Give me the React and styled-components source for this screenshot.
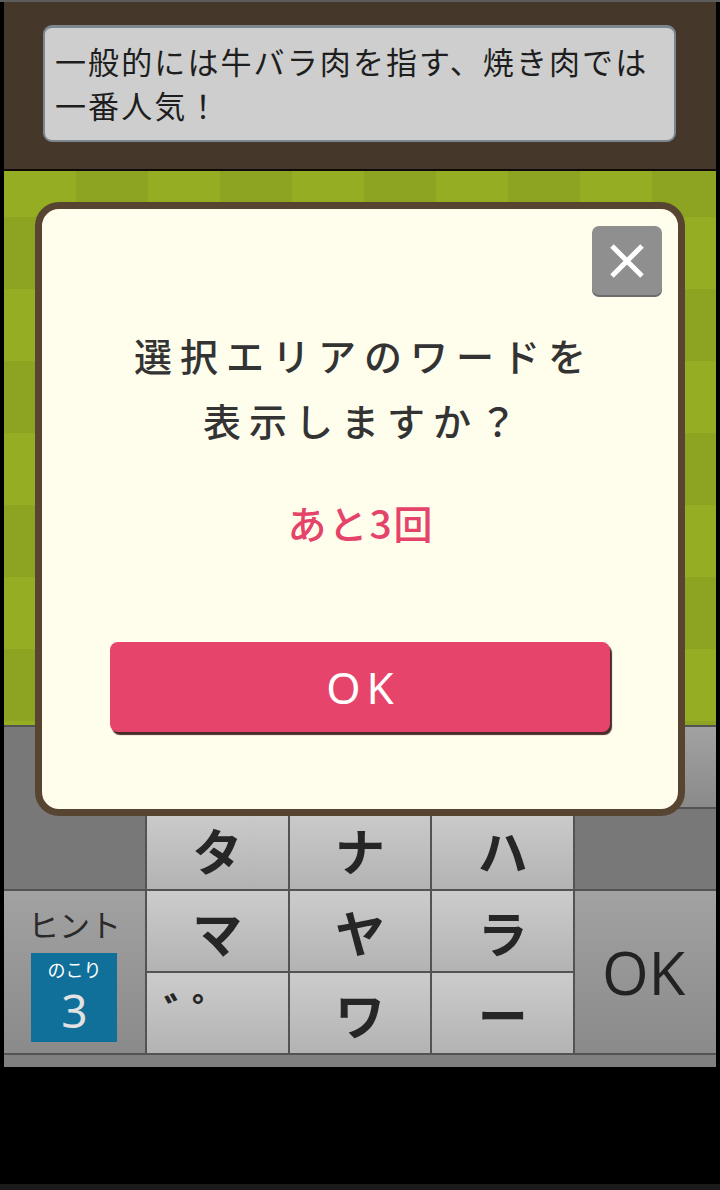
import React from 'react'
import styled, { createGlobalStyle } from 'styled-components'

const GlobalStyle = createGlobalStyle`
  html, body {
    margin: 0;
    padding: 0;
    background: #000000;
  }
`

const JP = `"Noto Sans CJK JP", "Noto Sans", sans-serif`

const Screen = styled.div`
  position: relative;
  width: 720px;
  height: 1190px;
  background: #000000;
  display: flex;
  flex-direction: column;
  overflow: hidden;
`

const TopLine = styled.div`
  height: 2px;
  background: #5c5c5c;
`

const Stage = styled.div`
  margin: 0 4px;
  display: flex;
  flex-direction: column;
`

const Header = styled.div`
  height: 169px;
  background: #45372a;
  padding: 23px 40px 0 39px;
  box-sizing: border-box;
  border-bottom: 2px solid #0d0a07;
`

const Clue = styled.div`
  height: 117px;
  box-sizing: border-box;
  background: #cecece;
  border: 2px solid #7c8690;
  border-top-width: 3px;
  border-radius: 9px;
  padding: 11px 10px 0 10px;
  font-family: ${JP};
  font-size: 31px;
  line-height: 44px;
  letter-spacing: 2.1px;
  color: #1e1e1e;
`

const Board = styled.div`
  height: 554px;
  background-color: #95ad22;
  background-image: conic-gradient(#8da423 25%, transparent 0 50%, #8da423 0 75%, transparent 0);
  background-size: 144px 144px;
  background-position: 0 -26px;
`

const Keyboard = styled.div`
  display: grid;
  grid-template-columns: repeat(5, 1fr);
  grid-template-rows: repeat(4, 80px);
  gap: 2px;
  padding-top: 2px;
  background: #535353;
`

const Key = styled.div`
  display: flex;
  align-items: center;
  justify-content: center;
  background: ${p => (p.$dark ? 'linear-gradient(#a2a2a2, #8a8a8a)' : 'linear-gradient(#cccccc, #b3b3b3)')};
  font-family: ${JP};
  font-weight: 700;
  font-size: 50px;
  color: #262626;
  grid-row: ${p => p.$rows || 'auto'};
  grid-column: ${p => p.$col || 'auto'};
`

const Blank = styled.div`
  background: #787878;
  grid-row: ${p => p.$rows || 'auto'};
  grid-column: ${p => p.$col || 'auto'};
`

const Marks = styled(Key)`
  align-items: flex-start;
  justify-content: flex-start;
  font-size: 42px;
  font-weight: 700;
  line-height: 1;
  letter-spacing: -14px;
  padding: 17px 0 0 17px;
`

const HintKey = styled(Key)`
  flex-direction: column;
  justify-content: flex-start;
  padding-top: 17px;
  gap: 13px;
  font-weight: 400;
`

const HintLabel = styled.div`
  font-size: 31px;
  line-height: 32px;
  color: #2a2a2a;
`

const Remaining = styled.div`
  width: 86px;
  height: 89px;
  background: #10709a;
  display: flex;
  flex-direction: column;
  align-items: center;
  padding-top: 3px;
  box-sizing: border-box;
`

const RemainingLabel = styled.div`
  font-size: 18px;
  line-height: 26px;
  color: #ffffff;
`

const RemainingCount = styled.div`
  font-family: "Noto Sans", sans-serif;
  font-size: 46px;
  line-height: 56px;
  color: #e2e2e2;
`

const EnterKey = styled(Key)`
  font-family: "Open Sans", "Noto Sans", sans-serif;
  font-weight: 400;
  font-size: 60px;
  color: #222222;
  padding-right: 4px;
`

const BottomBar = styled.div`
  height: 12px;
  background: #808080;
  border-top: 2px solid #535353;
`

const NavStrip = styled.div`
  margin-top: auto;
  height: 6px;
  background: #1b1b1b;
`

const Dialog = styled.div`
  position: absolute;
  top: 202px;
  left: 35px;
  width: 650px;
  height: 614px;
  box-sizing: border-box;
  background: #fffeec;
  border: 7px solid #574531;
  border-radius: 24px;
  display: flex;
  flex-direction: column;
  align-items: center;
  padding-top: 113px;
`

const CloseButton = styled.div`
  position: absolute;
  top: 17px;
  right: 16px;
  width: 70px;
  height: 69px;
  border-radius: 7px;
  background: #8f8f8f;
  box-shadow: 0 2px 0 #6c6c6c;
  display: flex;
  align-items: center;
  justify-content: center;
`

const Question = styled.div`
  font-family: ${JP};
  font-weight: 500;
  font-size: 38px;
  line-height: 65px;
  letter-spacing: 8px;
  padding-left: 8px;
  color: #333333;
  text-align: center;
`

const Count = styled.div`
  margin-top: 45px;
  font-family: ${JP};
  font-weight: 500;
  font-size: 39px;
  line-height: 50px;
  letter-spacing: 2px;
  padding-left: 2px;
  color: #e5436a;
`

const ConfirmButton = styled.div`
  margin-top: 95px;
  width: 500px;
  height: 90px;
  border-radius: 8px;
  background: #e6446a;
  box-shadow: 2px 3px 1px #4a2b2b;
  display: flex;
  align-items: center;
  justify-content: center;
  font-family: "Noto Sans", sans-serif;
  font-size: 44px;
  letter-spacing: 6px;
  padding-left: 6px;
  box-sizing: border-box;
  color: #ffffff;
`

const CloseIcon = () => (
  <svg width="34" height="34" viewBox="0 0 34 34">
    <path d="M2 2 L32 32 M32 2 L2 32" stroke="#ffffff" strokeWidth="5" strokeLinecap="butt" />
  </svg>
)

const App = () => {
  return (
    <>
      <GlobalStyle />
      <Screen>
        <TopLine />
        <Stage>
          <Header>
            <Clue>
              一般的には牛バラ肉を指す、焼き肉では
              <br />
              一番人気！
            </Clue>
          </Header>
          <Board />
          <Keyboard>
            <Blank $rows="1 / span 2" $col="1" />
            <Key>ア</Key>
            <Key>カ</Key>
            <Key>サ</Key>
            <Key $dark />
            <Key>タ</Key>
            <Key>ナ</Key>
            <Key>ハ</Key>
            <Blank />
            <HintKey $dark $rows="3 / span 2" $col="1">
              <HintLabel>ヒント</HintLabel>
              <Remaining>
                <RemainingLabel>のこり</RemainingLabel>
                <RemainingCount>3</RemainingCount>
              </Remaining>
            </HintKey>
            <Key>マ</Key>
            <Key>ヤ</Key>
            <Key>ラ</Key>
            <EnterKey $dark $rows="3 / span 2" $col="5">OK</EnterKey>
            <Marks>゛゜</Marks>
            <Key>ワ</Key>
            <Key>ー</Key>
          </Keyboard>
          <BottomBar />
        </Stage>
        <NavStrip />

        <Dialog>
          <CloseButton>
            <CloseIcon />
          </CloseButton>
          <Question>
            選択エリアのワードを
            <br />
            表示しますか？
          </Question>
          <Count>あと3回</Count>
          <ConfirmButton>OK</ConfirmButton>
        </Dialog>
      </Screen>
    </>
  )
}

export default App
